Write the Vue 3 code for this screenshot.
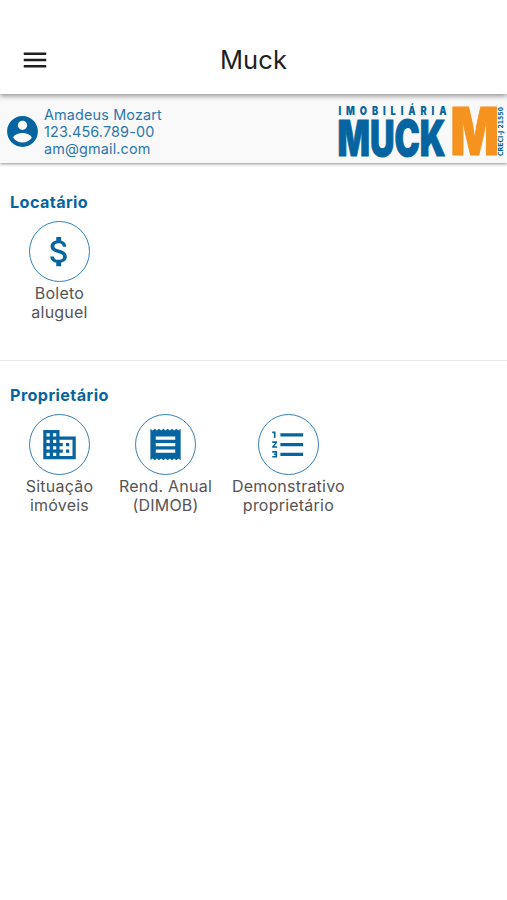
<template>
  <div class="app-page">
    <header class="app-toolbar">
      <button
        class="app-menu"
        type="button"
        aria-label="Abrir menu"
      >
        <svg viewBox="0 0 24 24">
          <path d="M3 18h18v-2H3v2zm0-5h18v-2H3v2zm0-7v2h18V6H3z" />
        </svg>
      </button>
      <h1>Muck</h1>
    </header>

    <section class="app-profile">
      <svg
        class="app-avatar"
        viewBox="0 0 24 24"
        aria-hidden="true"
      >
        <path d="M12 2C6.48 2 2 6.48 2 12s4.48 10 10 10 10-4.48 10-10S17.52 2 12 2zm0 3c1.66 0 3 1.34 3 3s-1.34 3-3 3-3-1.34-3-3 1.34-3 3-3zm0 14.2c-2.5 0-4.71-1.28-6-3.22.03-1.99 4-3.08 6-3.08 1.99 0 5.97 1.09 6 3.08-1.29 1.94-3.5 3.22-6 3.22z" />
      </svg>
      <div class="app-profile-data">
        <span
          v-for="line in profile"
          :key="line"
        >{{ line }}</span>
      </div>
      <svg
        class="app-logo"
        viewBox="0 0 170 60"
        role="img"
        aria-label="Imobiliária Muck"
      >
        <text
          class="logo-small"
          transform="translate(1.5 13.4) scale(0.8 1)"
          textLength="135"
        >IMOBILIÁRIA</text>
        <text
          class="logo-name"
          x="0.5"
          y="53.6"
          textLength="108"
          lengthAdjust="spacingAndGlyphs"
        >MUCK</text>
        <text
          class="logo-letter"
          x="113.4"
          y="53.4"
          textLength="48.4"
          lengthAdjust="spacingAndGlyphs"
        >M</text>
        <text
          class="logo-code"
          transform="translate(166 54) rotate(-90)"
          textLength="49"
          lengthAdjust="spacingAndGlyphs"
        >CRECI-J 21550</text>
      </svg>
    </section>

    <main>
      <section
        v-for="group in groups"
        :key="group.title"
        class="app-group"
      >
        <h2>{{ group.title }}</h2>
        <div class="app-tiles">
          <button
            v-for="item in group.items"
            :key="item.icon"
            class="app-tile"
            type="button"
          >
            <span class="app-tile-icon">
              <svg viewBox="0 0 24 24">
                <path :d="icons[item.icon]" />
              </svg>
            </span>
            <span
              v-for="line in item.lines"
              :key="line"
              class="app-tile-line"
            >{{ line }}</span>
          </button>
        </div>
      </section>
    </main>
  </div>
</template>

<script setup>
const profile = ['Amadeus Mozart', '123.456.789-00', 'am@gmail.com']

const icons = {
  money: 'M11.8 10.9c-2.27-.59-3-1.2-3-2.15 0-1.09 1.01-1.85 2.7-1.85 1.78 0 2.44.85 2.5 2.1h2.21c-.07-1.72-1.12-3.3-3.21-3.81V3h-3v2.16c-1.94.42-3.5 1.68-3.5 3.61 0 2.31 1.91 3.46 4.7 4.13 2.5.6 3 1.48 3 2.41 0 .69-.49 1.79-2.7 1.79-2.06 0-2.87-.92-2.98-2.1h-2.2c.12 2.19 1.76 3.42 3.68 3.83V21h3v-2.15c1.95-.37 3.5-1.5 3.5-3.55 0-2.84-2.43-3.81-4.7-4.4z',
  building: 'M12 7V3H2v18h20V7H12zM6 19H4v-2h2v2zm0-4H4v-2h2v2zm0-4H4V9h2v2zm0-4H4V5h2v2zm4 12H8v-2h2v2zm0-4H8v-2h2v2zm0-4H8V9h2v2zm0-4H8V5h2v2zm10 12h-8v-2h2v-2h-2v-2h2v-2h-2V9h8v10zm-2-8h-2v2h2v-2zm0 4h-2v2h2v-2z',
  receipt: 'M18 17H6v-2h12v2zm0-4H6v-2h12v2zm0-4H6V7h12v2zM2.7 21.7l1.33-1.1 1.33 1.1 1.33-1.1 1.33 1.1 1.33-1.1 1.33 1.1 1.33-1.1 1.33 1.1 1.33-1.1 1.33 1.1 1.33-1.1 1.33 1.1 1.33-1.1 1.33 1.1V2.3l-1.33 1.1-1.33-1.1-1.33 1.1-1.33-1.1-1.33 1.1-1.33-1.1-1.33 1.1-1.33-1.1-1.33 1.1-1.33-1.1-1.33 1.1-1.33-1.1-1.33 1.1-1.33-1.1z',
  list: 'M2 17h2v.5H3v1h1v.5H2v1h3v-4H2v1zm1-9h1V4H2v1h1v3zm-1 3h1.8L2 13.1v.9h3v-1H3.2L5 10.9V10H2v1zm5-6v2h14V5H7zm0 14h14v-2H7v2zm0-6h14v-2H7v2z'
}

const groups = [
  {
    title: 'Locatário',
    items: [{ icon: 'money', lines: ['Boleto', 'aluguel'] }]
  },
  {
    title: 'Proprietário',
    items: [
      { icon: 'building', lines: ['Situação', 'imóveis'] },
      { icon: 'receipt', lines: ['Rend. Anual', '(DIMOB)'] },
      { icon: 'list', lines: ['Demonstrativo', 'proprietário'] }
    ]
  }
]
</script>

<style>
body {
  background: #ffffff;
}
</style>

<style scoped>
.app-page {
  --app-primary: #0664a0;
  min-height: 900px;
  overflow: hidden;
  background: #ffffff;
  color: #1f1f1f;
  font-family: Inter, "Liberation Sans", sans-serif;
}

.app-page * {
  box-sizing: border-box;
}

button {
  padding: 0;
  border: 0;
  background: transparent;
  color: inherit;
  font: inherit;
  cursor: pointer;
}

svg {
  display: block;
  fill: currentColor;
}

.app-toolbar {
  position: relative;
  display: grid;
  grid-template-columns: 50px 1fr 50px;
  align-items: center;
  height: 94px;
  padding: 26px 0 0;
  background: #ffffff;
  box-shadow: 0 2px 5px rgb(0 0 0 / 42%);
}

.app-menu {
  padding-left: 20px;
}

.app-menu svg {
  width: 30px;
  height: 30px;
}

.app-toolbar h1 {
  margin: 0;
  font-size: 25.5px;
  font-weight: 400;
  line-height: 32px;
  letter-spacing: 0.1px;
  text-align: center;
}

.app-profile {
  display: flex;
  align-items: center;
  height: 69px;
  padding: 6px 0 0 4px;
  background: #f9f9f9;
  box-shadow: 0 1px 3px rgb(0 0 0 / 45%);
  color: var(--app-primary);
}

.app-avatar {
  width: 37px;
  height: 37px;
}

.app-profile-data {
  display: flex;
  flex-direction: column;
  margin-left: 3px;
  color: #2c77ac;
  font-size: 14.4px;
  line-height: 17.2px;
  letter-spacing: 0.15px;
}

.app-logo {
  width: 170px;
  height: 60px;
  margin-left: auto;
}

.app-logo text {
  font-family: Inter, "Liberation Sans", sans-serif;
  font-weight: 800;
}

.app-logo .logo-small {
  font-size: 11.5px;
  font-weight: 900;
}

.app-logo .logo-name {
  stroke: currentColor;
  stroke-width: 1px;
  font-size: 49px;
  font-weight: 900;
}

.app-logo .logo-letter {
  fill: #f6921e;
  stroke: #f6921e;
  stroke-width: 1.2px;
  font-size: 66px;
  font-weight: 900;
}

.app-logo .logo-code {
  font-family: "DejaVu Sans", sans-serif;
  font-size: 7px;
  font-weight: 700;
}

.app-group {
  height: 193px;
  padding: 29px 10px 0;
}

.app-group + .app-group {
  border-top: 1px solid #e6e6e6;
}

.app-group:first-child {
  height: 197px;
}

.app-group h2 {
  margin: 0;
  color: var(--app-primary);
  font-size: 16.2px;
  font-weight: 700;
  line-height: 20px;
  letter-spacing: 0.4px;
}

.app-group:nth-child(2) {
  padding-top: 24px;
}

.app-tiles {
  display: flex;
  align-items: flex-start;
  margin-top: 9px;
}

.app-tile {
  display: flex;
  flex-direction: column;
  align-items: center;
  min-width: 99px;
  padding: 0 10px;
  color: #555555;
  font-size: 16px;
  line-height: 19.5px;
  letter-spacing: 0.22px;
}

.app-tile-icon {
  display: grid;
  place-items: center;
  width: 61px;
  height: 61px;
  margin-bottom: 1.5px;
  border: 1.3px solid #3580b3;
  border-radius: 50%;
  color: var(--app-primary);
}

.app-tile-icon svg {
  width: 39px;
  height: 39px;
}
</style>
